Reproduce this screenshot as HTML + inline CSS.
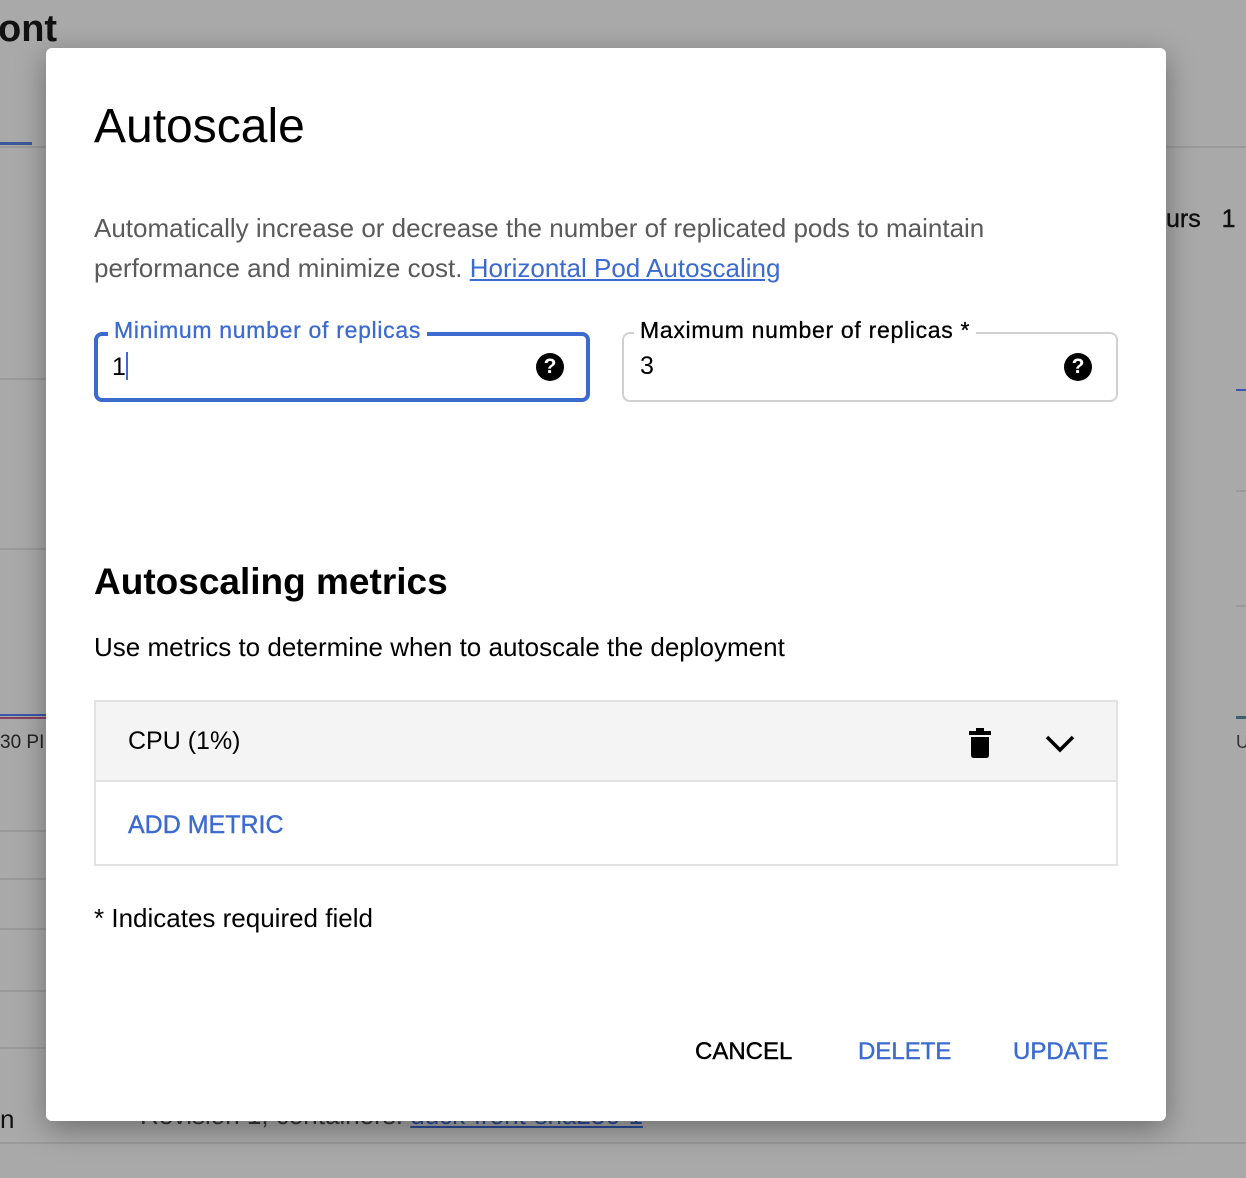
<!DOCTYPE html>
<html><head><style>
*{margin:0;padding:0;box-sizing:border-box}
body{width:1246px;height:1178px;background:#a9a9a9;font-family:"Liberation Sans",Arial,sans-serif;position:relative;overflow:hidden}
.a{position:absolute}
.line{position:absolute;height:2px;background:#9a9a9a}
.dlg{position:absolute;left:46px;top:48px;width:1120px;height:1073px;background:#fff;border-radius:6px;box-shadow:0 8px 30px rgba(0,0,0,.35)}
.field{position:absolute;height:70px;border-radius:8px}
.lbl{position:absolute;top:-15px;background:#fff;padding:0 6px;font-size:23px;letter-spacing:0.7px;white-space:nowrap;-webkit-text-stroke:0.3px}
.q{position:absolute;width:28px;height:28px;border-radius:50%;background:#000;color:#fff;font-weight:bold;font-size:21px;text-align:center;line-height:28px}
.btn{position:absolute;font-size:24px;top:990px;-webkit-text-stroke:0.4px}
</style></head><body>
<div class="a" style="left:-2px;top:8px;font-size:38px;font-weight:bold;color:#111">ont</div>
<div class="a" style="left:0;top:142px;width:32px;height:3px;background:#3c5a9a"></div>
<div class="line" style="left:0;width:46px;top:146px"></div>
<div class="line" style="left:0;width:46px;top:378px"></div>
<div class="line" style="left:0;width:46px;top:548px"></div>
<div class="a" style="left:0;top:714px;width:46px;height:2px;background:#3a56a8"></div>
<div class="a" style="left:0;top:717px;width:46px;height:2px;background:#8a4060"></div>
<div class="a" style="left:0;top:732px;font-size:19px;color:#222">30 PI</div>
<div class="line" style="left:0;width:46px;top:830px"></div>
<div class="line" style="left:0;width:46px;top:878px"></div>
<div class="line" style="left:0;width:46px;top:928px"></div>
<div class="line" style="left:0;width:46px;top:990px"></div>
<div class="line" style="left:0;width:46px;top:1047px"></div>
<div class="line" style="left:0;width:1246px;top:1142px"></div>
<div class="a" style="left:0;top:1104px;font-size:26px;color:#111">n</div>
<div class="a" style="left:140px;top:1100px;font-size:26px;color:#333">Revision 1, containers: <span style="color:#2a4a9a;text-decoration:underline">duck-front-sha256-1</span></div>
<div class="line" style="left:1166px;width:80px;top:146px"></div>
<div class="a" style="left:1166px;top:205px;font-size:25px;color:#111;-webkit-text-stroke:0.4px">urs &nbsp; 1</div>
<div class="a" style="left:1236px;top:389px;width:10px;height:2px;background:#3a56a8"></div>
<div class="line" style="left:1236px;width:10px;top:490px"></div>
<div class="line" style="left:1236px;width:10px;top:605px"></div>
<div class="a" style="left:1236px;top:716px;width:10px;height:3px;background:#3a6070"></div>
<div class="a" style="left:1236px;top:732px;font-size:18px;color:#333">U</div>

<div class="dlg">
<div class="a" style="left:48px;top:51px;font-size:48px;color:#000">Autoscale</div>
<div class="a" style="left:48px;top:160px;width:960px;font-size:26px;line-height:40px;color:#5a5a5a">Automatically increase or decrease the number of replicated pods to maintain performance and minimize cost. <span style="color:#3b6ad0;text-decoration:underline">Horizontal Pod Autoscaling</span></div>

<div class="field" style="left:48px;top:284px;width:496px;border:4px solid #3c6bd0">
<div class="lbl" style="left:10px;top:-19px;color:#3c6bd0">Minimum number of replicas</div>
<div class="a" style="left:14px;top:16px;font-size:25px">1<span style="display:inline-block;width:2px;height:28px;background:#3c6bd0;vertical-align:-5px"></span></div>
<div class="q" style="left:438px;top:17px">?</div>
</div>
<div class="field" style="left:576px;top:284px;width:496px;border:2px solid #d0d0d0">
<div class="lbl" style="left:10px;top:-17px;color:#000">Maximum number of replicas *</div>
<div class="a" style="left:16px;top:18px;font-size:25px">3</div>
<div class="q" style="left:440px;top:19px">?</div>
</div>

<div class="a" style="left:48px;top:513px;font-size:37px;font-weight:bold;color:#000">Autoscaling metrics</div>
<div class="a" style="left:48px;top:584px;font-size:26px;color:#000">Use metrics to determine when to autoscale the deployment</div>

<div class="a" style="left:48px;top:652px;width:1024px;height:166px;border:2px solid #e2e2e2">
<div class="a" style="left:0;top:0;width:1020px;height:80px;background:#f4f4f4;border-bottom:2px solid #e2e2e2"></div>
<div class="a" style="left:32px;top:25px;font-size:25px;color:#000">CPU (1%)</div>
<svg class="a" style="left:872px;top:26px" width="24" height="32" viewBox="0 0 24 32"><rect x="1" y="3" width="22" height="4" fill="#000"/><rect x="8" y="0" width="8" height="4" fill="#000"/><path d="M3 9h18v18q0 3-3 3H6q-3 0-3-3z" fill="#000"/></svg>
<svg class="a" style="left:949px;top:32px" width="30" height="20" viewBox="0 0 30 20"><path d="M2 3l13 13L28 3" stroke="#000" stroke-width="3.5" fill="none"/></svg>
<div class="a" style="left:32px;top:109px;font-size:25px;color:#3c6bd0;-webkit-text-stroke:0.4px">ADD METRIC</div>
</div>

<div class="a" style="left:48px;top:855px;font-size:26px;color:#000">* Indicates required field</div>

<div class="btn" style="left:649px;color:#000">CANCEL</div>
<div class="btn" style="left:812px;color:#3c6bd0">DELETE</div>
<div class="btn" style="left:967px;color:#3c6bd0">UPDATE</div>
</div>
</body></html>
